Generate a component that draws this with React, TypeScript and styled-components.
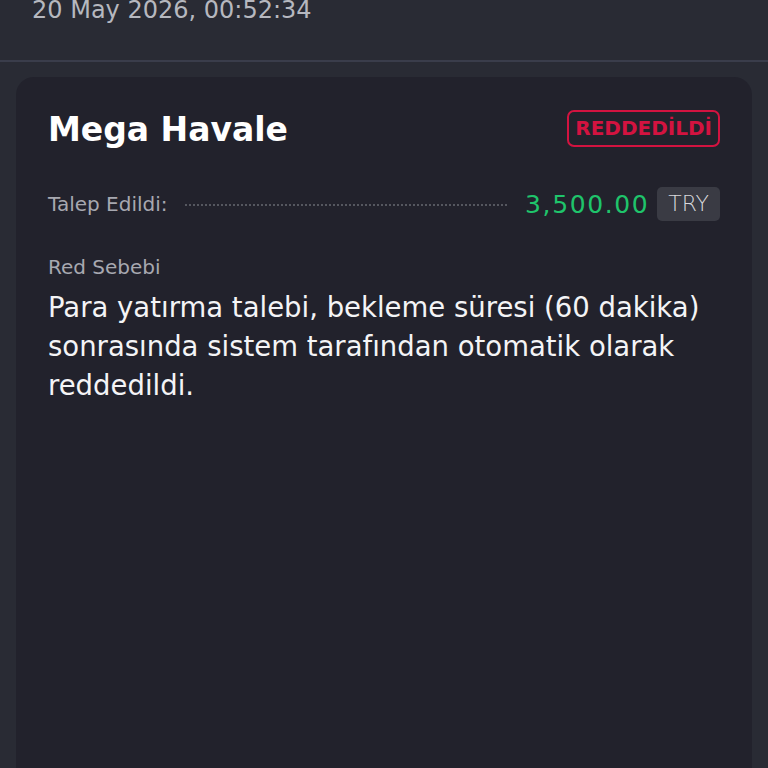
import styled, { createGlobalStyle } from "styled-components";

const GlobalStyle = createGlobalStyle`
  html, body {
    margin: 0;
    padding: 0;
    background: #292b34;
    font-family: "DejaVu Sans", "Noto Sans", sans-serif;
    overflow: hidden;
  }
`;

const Page = styled.div`
  width: 768px;
  height: 768px;
  display: flex;
  flex-direction: column;
  background: #292b34;
  overflow: hidden;
`;

const Header = styled.div`
  padding: 0 32px;
  margin-top: -4px;
  height: 66px;
  border-bottom: 2px solid #3a3d4b;
  box-sizing: border-box;
`;

const DateText = styled.div`
  font-size: 24px;
  line-height: 28px;
  color: #b6b8bf;
`;

const Card = styled.div`
  margin: 15px 16px 0;
  flex: 1;
  background: #22222c;
  border-radius: 18px 18px 0 0;
  padding: 31px 32px;
  display: flex;
  flex-direction: column;
`;

const TitleRow = styled.div`
  display: flex;
  justify-content: space-between;
  align-items: center;
`;

const Title = styled.h1`
  margin: 0;
  font-size: 33px;
  line-height: 40px;
  font-weight: 700;
  color: #ffffff;
  transform: translateY(2px);
`;

const Badge = styled.span`
  border: 2px solid #d31340;
  border-radius: 7px;
  color: #d31340;
  font-weight: 700;
  font-size: 20px;
  line-height: 29px;
  padding: 2px 6px;
`;

const AmountRow = styled.div`
  display: flex;
  align-items: center;
  margin-top: 39px;
`;

const Label = styled.span`
  font-size: 20px;
  line-height: 24px;
  color: #a7a8b0;
`;

const Dots = styled.span`
  flex: 1;
  border-bottom: 2px dotted #55575f;
  margin: 0 18px 0 17px;
  transform: translateY(1px);
`;

const Amount = styled.span`
  font-size: 25px;
  color: #1fc46b;
  letter-spacing: 1.6px;
`;

const Currency = styled.span`
  margin-left: 8px;
  background: #3a3b44;
  color: #d8d8dc;
  font-size: 22px;
  line-height: 34px;
  font-weight: 200;
  padding: 0 11px;
  border-radius: 5px;
`;

const SectionLabel = styled(Label)`
  margin-top: 34px;
`;

const Reason = styled.p`
  margin: 9px 0 0;
  font-size: 27.5px;
  line-height: 39px;
  color: #f4f4f6;
`;

export default function App() {
  return (
    <Page>
      <GlobalStyle />
      <Header>
        <DateText>20 May 2026, 00:52:34</DateText>
      </Header>
      <Card>
        <TitleRow>
          <Title>Mega Havale</Title>
          <Badge>REDDEDİLDİ</Badge>
        </TitleRow>
        <AmountRow>
          <Label>Talep Edildi:</Label>
          <Dots />
          <Amount>3,500.00</Amount>
          <Currency>TRY</Currency>
        </AmountRow>
        <SectionLabel>Red Sebebi</SectionLabel>
        <Reason>
          Para yatırma talebi, bekleme süresi (60 dakika) sonrasında sistem
          tarafından otomatik olarak reddedildi.
        </Reason>
      </Card>
    </Page>
  );
}
